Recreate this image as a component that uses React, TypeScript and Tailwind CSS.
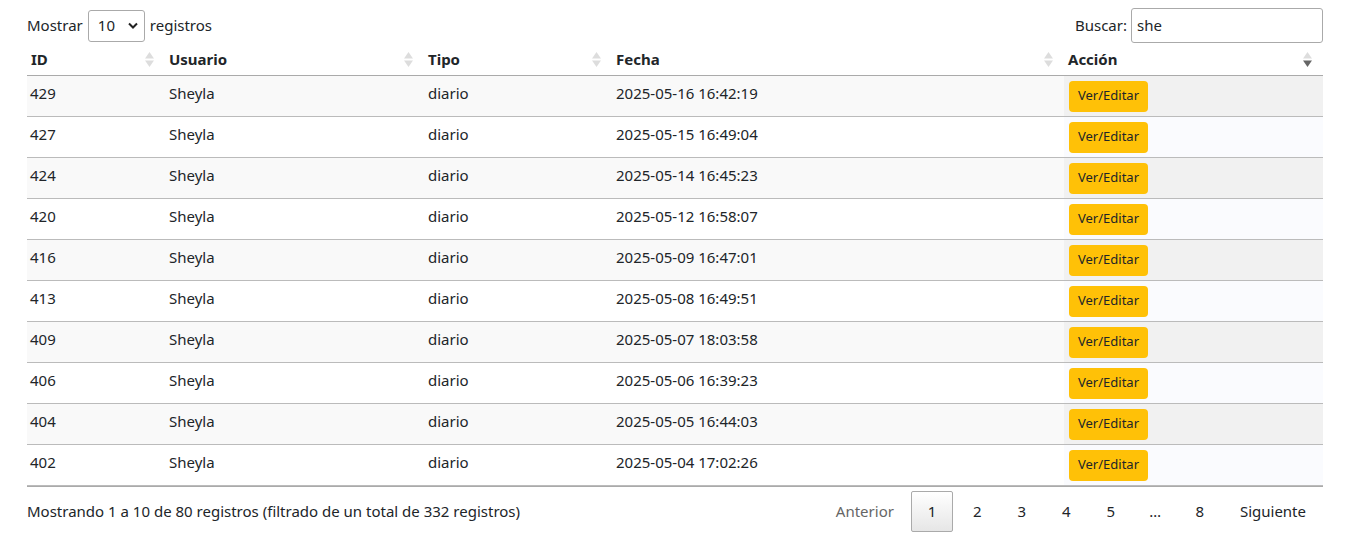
import React from 'react';

interface Row {
  id: number;
  user: string;
  type: string;
  date: string;
}

const rows: Row[] = [
  { id: 429, user: 'Sheyla', type: 'diario', date: '2025-05-16 16:42:19' },
  { id: 427, user: 'Sheyla', type: 'diario', date: '2025-05-15 16:49:04' },
  { id: 424, user: 'Sheyla', type: 'diario', date: '2025-05-14 16:45:23' },
  { id: 420, user: 'Sheyla', type: 'diario', date: '2025-05-12 16:58:07' },
  { id: 416, user: 'Sheyla', type: 'diario', date: '2025-05-09 16:47:01' },
  { id: 413, user: 'Sheyla', type: 'diario', date: '2025-05-08 16:49:51' },
  { id: 409, user: 'Sheyla', type: 'diario', date: '2025-05-07 18:03:58' },
  { id: 406, user: 'Sheyla', type: 'diario', date: '2025-05-06 16:39:23' },
  { id: 404, user: 'Sheyla', type: 'diario', date: '2025-05-05 16:44:03' },
  { id: 402, user: 'Sheyla', type: 'diario', date: '2025-05-04 17:02:26' },
];

const SortIcon = ({ active }: { active?: boolean }) => (
  <svg width="9" height="15" viewBox="0 0 9 15" className="shrink-0">
    <path d="M4.5 0 L9 6.5 L0 6.5 Z" fill="#dddddd" />
    <path d="M4.5 15 L9 8.5 L0 8.5 Z" fill={active ? '#666666' : '#dddddd'} />
  </svg>
);

const headers = ['ID', 'Usuario', 'Tipo', 'Fecha', 'Acción'];
const grid = 'grid grid-cols-[138px_259px_188px_452px_259px]';

export default function App() {
  return (
    <div
      className="w-[1353px] h-[550px] bg-white text-[#212529] text-[15px]"
      style={{ fontFamily: '"Noto Sans", "Open Sans", sans-serif' }}
    >
      <div className="ml-[27px] w-[1296px] pt-[8px]">
        <div className="flex items-center justify-between h-[35px]">
          <div className="flex items-center gap-[5px]">
            <span>Mostrar</span>
            <div className="flex items-center justify-between w-[57px] h-[32px] border border-[#aaa] rounded-[3px] pl-[9px] pr-[6px]">
              <span>10</span>
              <svg width="10" height="7" viewBox="0 0 10 7">
                <path d="M1 1.5 L5 5.5 L9 1.5" stroke="#222" strokeWidth="2" fill="none" />
              </svg>
            </div>
            <span>registros</span>
          </div>
          <div className="flex items-center gap-[4px]">
            <span>Buscar:</span>
            <div className="w-[192px] h-[35px] border border-[#aaa] rounded-[3px] flex items-center px-[5px]">
              she
            </div>
          </div>
        </div>

        <div className={`${grid} mt-[1px] h-[32px] border-b border-[#aaa] font-bold`}>
          {headers.map((h, i) => (
            <div key={h} className="flex items-center justify-between pl-[4px] pr-[11px]">
              <span>{h}</span>
              <SortIcon active={i === 4} />
            </div>
          ))}
        </div>

        {rows.map((r, i) => {
          const odd = i % 2 === 0;
          return (
            <div
              key={r.id}
              className={`${grid} h-[41px] border-b border-[#bbb] leading-normal ${odd ? 'bg-[#f9f9f9]' : 'bg-white'}`}
            >
              <div className="pt-[6px] pl-[3px]">{r.id}</div>
              <div className="pt-[6px] pl-[4px]">{r.user}</div>
              <div className="pt-[6px] pl-[4px]">{r.type}</div>
              <div className="pt-[6px] pl-[4px]">{r.date}</div>
              <div className={`flex items-center pl-[5px] ${odd ? 'bg-[#f1f1f1]' : 'bg-[#fafbfe]'}`}>
                <button className="h-[31px] px-[9px] rounded-[4px] bg-[#ffc107] text-[13px] text-[#212529]">
                  Ver/Editar
                </button>
              </div>
            </div>
          );
        })}

        <div className="flex items-center justify-between pt-[4px] border-t border-[#aaa]">
          <span>Mostrando 1 a 10 de 80 registros (filtrado de un total de 332 registros)</span>
          <div className="flex items-center pr-[17px]">
            <span className="px-[15px] text-[#666]">Anterior</span>
            <span className="w-[42px] h-[41px] flex items-center justify-center border border-[#aaa] rounded-[2px] bg-gradient-to-b from-white to-[#e6e6e6] mx-[2px]">
              1
            </span>
            {['2', '3', '4', '5', '…', '8'].map((p) => (
              <span key={p} className="w-[44.5px] h-[41px] flex items-center justify-center">
                {p}
              </span>
            ))}
            <span className="pl-[18px]">Siguiente</span>
          </div>
        </div>
      </div>
    </div>
  );
}
